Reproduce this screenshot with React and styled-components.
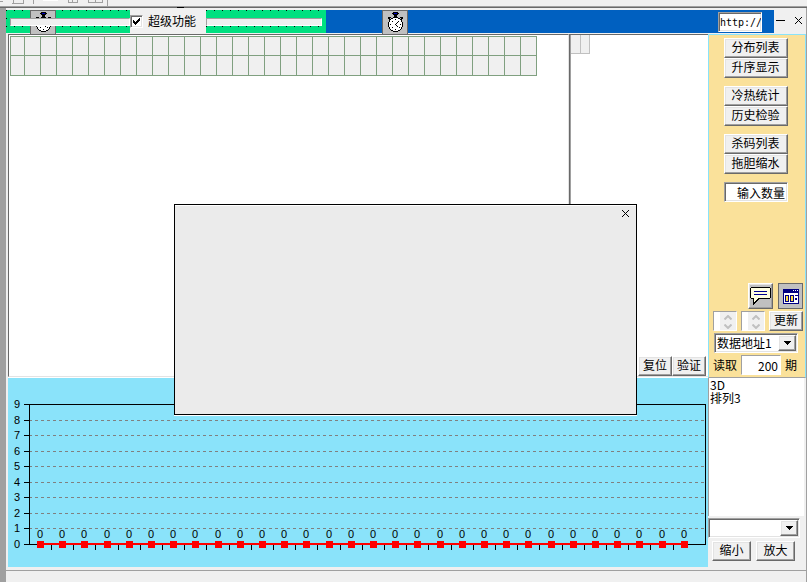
import styled, { createGlobalStyle, css } from "styled-components"

const yLabels = [9, 8, 7, 6, 5, 4, 3, 2, 1, 0]
const points = Array.from({ length: 30 }, () => 0)
const gridCols = Array.from({ length: 33 }, (_, i) => i)

const App = () => {
    return (
        <>
            <GlobalStyle />
            <Page>
                <TopStrip>
                    <StripIcons />
                </TopStrip>
                <Main>
                    <Gutter />
                    <Window>
                        <Header />
                        <Body>
                            <Panels>
                                <MainPanel>
                                    <NumberGrid />
                                </MainPanel>
                                <SubPanel>
                                    <SmallTable>
                                        <tbody>
                                            <tr>
                                                <td />
                                                <td />
                                            </tr>
                                        </tbody>
                                    </SmallTable>
                                    <PanelActions>
                                        <Button $w={34}>复位</Button>
                                        <Button $w={34}>验证</Button>
                                    </PanelActions>
                                </SubPanel>
                            </Panels>
                            <Tools />
                            <ChartArea>
                                <Chart />
                            </ChartArea>
                            <Lists />
                        </Body>
                        <StatusBar />
                    </Window>
                </Main>
                <Dialog role="dialog" aria-label="dialog">
                    <CloseButton aria-label="close">
                        <CrossIcon />
                    </CloseButton>
                </Dialog>
            </Page>
        </>
    )
}

const Header = () => (
    <HeaderBar>
        <GreenBox $w={124}>
            <IconButton $left={24} aria-label="timer">
                <ClockIcon />
            </IconButton>
            <Track $start={4} $end={0} />
        </GreenBox>
        <CheckLabel>
            <CheckWrap>
                <Check type="checkbox" defaultChecked />
                <CheckMark viewBox="0 0 7 7" width="7" height="7">
                    <path d="M0 2h1v1h1v1h1v-1h1v-1h1v-1h1v-1h1v3h-1v1h-1v1h-1v1h-1v1h-1v-1h-1v-1h-1z" />
                </CheckMark>
            </CheckWrap>
            超级功能
        </CheckLabel>
        <GreenBox $w={120}>
            <Track $start={0} $end={4} />
        </GreenBox>
        <BlueBox>
            <IconButton $left={56} aria-label="timer">
                <ClockIcon />
            </IconButton>
            <UrlInput aria-label="url" defaultValue="http://" />
        </BlueBox>
        <WindowButtons>
            <CaptionButton aria-label="minimize">
                <svg width="9" height="7" shapeRendering="crispEdges">
                    <rect y="3" width="9" height="1" />
                </svg>
            </CaptionButton>
            <CaptionButton aria-label="close">
                <CrossIcon />
            </CaptionButton>
        </WindowButtons>
    </HeaderBar>
)

const NumberGrid = () => (
    <GridTable>
        <tbody>
            {[19, 20].map((h) => (
                <tr key={h}>
                    {gridCols.map((c) => (
                        <GridCell key={c} $w={c === 0 ? 14 : 16} $h={h} />
                    ))}
                </tr>
            ))}
        </tbody>
    </GridTable>
)

const Tools = () => (
    <ToolColumn>
        <ButtonGroup>
            <Button $w={64}>分布列表</Button>
            <Button $w={64}>升序显示</Button>
        </ButtonGroup>
        <ButtonGroup>
            <Button $w={64}>冷热统计</Button>
            <Button $w={64}>历史检验</Button>
        </ButtonGroup>
        <ButtonGroup>
            <Button $w={64}>杀码列表</Button>
            <Button $w={64}>拖胆缩水</Button>
        </ButtonGroup>
        <CountInput aria-label="输入数量" defaultValue="输入数量" />
        <BottomTools>
            <ToolRow $gap={5}>
                <ToolButton aria-label="comment">
                    <BubbleIcon />
                </ToolButton>
                <ToolButton aria-label="window">
                    <WindowIcon />
                </ToolButton>
            </ToolRow>
            <ToolRow $gap={4}>
                <Spinner />
                <Spinner />
                <Button $w={34}>更新</Button>
            </ToolRow>
            <AddressRow>
                <Combo $w={84}>
                    <select aria-label="数据地址" defaultValue="1">
                        <option value="1">数据地址1</option>
                    </select>
                    <ComboArrow />
                </Combo>
            </AddressRow>
            <ReadRow>
                <label htmlFor="count">读取</label>
                <PeriodInput id="count" defaultValue="200" />
                <span>期</span>
            </ReadRow>
        </BottomTools>
    </ToolColumn>
)

const Spinner = () => (
    <SpinBox>
        <input aria-label="value" disabled />
        <SpinButtons>
            <button aria-label="up" disabled>
                <svg width="8" height="5" viewBox="0 0 8 5">
                    <path d="M0.5 4.5L4 1L7.5 4.5" />
                </svg>
            </button>
            <button aria-label="down" disabled>
                <svg width="8" height="5" viewBox="0 0 8 5">
                    <path d="M0.5 0.5L4 4L7.5 0.5" />
                </svg>
            </button>
        </SpinButtons>
    </SpinBox>
)

const ComboArrow = () => (
    <ArrowBox>
        <svg width="7" height="4" shapeRendering="crispEdges">
            <path d="M0 0h7v1h-1v1h-1v1h-1v1h-1v-1h-1v-1h-1v-1h-1z" />
        </svg>
    </ArrowBox>
)

const Lists = () => (
    <ListColumn>
        <ListBox size={2} aria-label="games">
            <option>3D</option>
            <option>排列3</option>
        </ListBox>
        <Combo $w={92}>
            <select aria-label="filter" />
            <ComboArrow />
        </Combo>
        <ZoomRow>
            <Button $w={39}>缩小</Button>
            <Button $w={39}>放大</Button>
        </ZoomRow>
    </ListColumn>
)

const Chart = () => {
    const lineY = (i) => 26 + Math.round(i * 15.5)
    const pointX = (i) => 32 + Math.round(i * 22.2)

    return (
        <ChartSvg viewBox="0 0 700 189" shapeRendering="crispEdges">
            {yLabels.map((label, i) => (
                <g key={label}>
                    <rect x="16" y={lineY(i)} width="6" height="1" />
                    <text x="12" y={lineY(i) + 4} textAnchor="end">{label}</text>
                    {i > 0 && i < 9 && (
                        <line x1="21" x2="697" y1={lineY(i) + 0.5} y2={lineY(i) + 0.5} stroke="#808080" strokeDasharray="3 3" />
                    )}
                </g>
            ))}
            <rect x="21.5" y="26.5" width="676" height="140" fill="none" stroke="#000" />
            <rect x="32" y="165" width="644" height="2" fill="#f00" />
            {points.map((p, i) => (
                <g key={i}>
                    {i < points.length - 1 && <rect x={pointX(i) + 11} y="167" width="1" height="5" />}
                    <rect x={pointX(i) - 3} y="163" width="7" height="7" fill="#f00" />
                    <text x={pointX(i)} y="160" textAnchor="middle">{p}</text>
                </g>
            ))}
        </ChartSvg>
    )
}

const CrossIcon = () => (
    <svg width="9" height="9" viewBox="0 0 9 9">
        <path d="M1 1L8 8M8 1L1 8" stroke="#000" fill="none" />
    </svg>
)

const ClockIcon = () => (
    <svg width="17" height="21" viewBox="0 0 17 21" shapeRendering="crispEdges">
        <path d="M6 0h5v1h1v1h-1v1h-5v-1h-1v-1h1z" />
        <rect x="7" y="1" width="3" height="1" fill="#0000c0" />
        <path d="M7 3h3v2h-3zM1 5h3v1h-1v2h-1v-1h-1zM13 5h3v2h-1v1h-1v-2h-1z" />
        <path d="M6 5h5v1h2v1h1v1h1v2h1v5h-1v2h-1v1h-1v1h-2v1h-5v-1h-2v-1h-1v-1h-1v-2h-1v-5h1v-2h1v-1h1v-1h2z" fill="#fff" />
        <path d="M6 5h5v1h-5zM4 6h2v1h-2zM11 6h2v1h-2zM3 7h1v1h-1zM13 7h1v1h-1zM2 8h1v2h-1zM14 8h1v2h-1zM1 10h1v5h-1zM15 10h1v5h-1zM2 15h1v2h-1zM14 15h1v2h-1zM3 17h1v1h-1zM13 17h1v1h-1zM4 18h2v1h-2zM11 18h2v1h-2zM6 19h5v1h-5z" />
        <path d="M8 7h1v1h-1zM8 17h1v1h-1zM3 12h1v1h-1zM13 12h1v1h-1zM5 9h1v1h-1zM5 15h1v1h-1zM12 15h1v1h-1zM11 9h1v1h-1zM10 10h1v1h-1zM9 11h1v1h-1zM8 12h1v1h-1zM9 13h1v1h-1zM10 14h1v1h-1z" />
    </svg>
)

const BubbleIcon = () => (
    <svg width="21" height="18" viewBox="0 0 21 18" shapeRendering="crispEdges">
        <path d="M1 0h19v1h1v10h-1v1h-11v1h-1v1h-1v1h-1v1h-1v1h-1v1h-1v-6h-2v-1h-1v-10h1z" />
        <path d="M1 1h19v10h-12v1h-1v1h-1v1h-1v1h-1v-4h-3z" fill="#ffffe0" />
        <path d="M4 4h13v1h-13zM4 7h13v1h-13z" fill="#000090" />
    </svg>
)

const WindowIcon = () => (
    <svg width="16" height="15" viewBox="0 0 16 15" shapeRendering="crispEdges">
        <rect width="16" height="15" fill="#000080" />
        <rect x="1" y="4" width="14" height="10" fill="#fff" />
        <path d="M10 1h1v1h-1zM12 1h1v1h-1zM14 1h1v1h-1z" fill="#fff" />
        <path d="M2 6h4v7h-4zM7 6h4v7h-4zM12 6h3v1h-3zM12 9h2v2h-2z" fill="#000080" />
        <path d="M3 7h2v5h-2zM8 7h2v5h-2z" fill="#ffe040" />
    </svg>
)

const StripIcons = () => (
    <svg width="190" height="8" shapeRendering="crispEdges">
        <path d="M0 1h3M12 3.5h12M13 0v3M23 0v3M68 2.5h9M68 0v3M72.5 0v3M77 0v3M88 2.5h15M88.5 0v3M95.5 0v3M102.5 0v3M33.5 0v4M107.5 0v6" stroke="#a0a0a0" fill="none" />
        <rect x="43" y="0" width="15" height="1" fill="#fff" />
        <rect x="177" y="7" width="7" height="1" />
    </svg>
)

const GlobalStyle = createGlobalStyle`
    * {
        box-sizing: border-box;
    }
    body {
        margin: 0;
        background: #f0f0f0;
    }
    body, button, input, select, option {
        font-family: "Noto Sans CJK SC", "Liberation Sans", sans-serif;
        font-size: 12px;
        line-height: 14px;
        color: #000;
    }
    button, input, select {
        margin: 0;
        padding: 0;
        border-radius: 0;
        appearance: none;
    }
    svg {
        display: block;
    }
`

const raised = css`
    border: 1px solid;
    border-color: #fff #696969 #696969 #fff;
    box-shadow: inset -1px -1px 0 #a0a0a0, inset 1px 1px 0 #e3e3e3;
`

const sunken = css`
    border: 1px solid;
    border-color: #a0a0a0 #fff #fff #a0a0a0;
    box-shadow: inset 1px 1px 0 #696969, inset -1px -1px 0 #e3e3e3;
`

const Page = styled.div`
    position: relative;
    display: flex;
    flex-direction: column;
    min-height: 100vh;
`

const TopStrip = styled.div`
    height: 8px;
    background: linear-gradient(#a0a0a0, #a0a0a0) 0 6px / 100% 1px no-repeat,
        linear-gradient(#696969, #696969) 0 7px / 100% 1px no-repeat;
`

const Main = styled.div`
    display: flex;
    flex: 1;
`

const Gutter = styled.div`
    width: 6px;
    background: #a0a0a0;
`

const Window = styled.div`
    display: flex;
    flex-direction: column;
    flex: 1;
    min-width: 0;
    padding-top: 2px;
    border-right: 1px solid #a0a0a0;
`

const HeaderBar = styled.header`
    display: flex;
    height: 24px;
    padding-bottom: 1px;
`

const GreenBox = styled.div`
    position: relative;
    display: flex;
    align-items: flex-start;
    width: ${(props) => props.$w}px;
    padding-top: 8px;
    background: conic-gradient(from 270deg at 1px 1px, #000 90deg, transparent 0) 0 0 / 8px 8px, #00e080;
`

const Track = styled.div`
    position: relative;
    z-index: 2;
    flex: 1;
    height: 8px;
    margin: 0 ${(props) => props.$end}px 0 ${(props) => props.$start}px;
    background: #f0f0f0;
    border: 1px solid;
    border-color: #a0a0a0 #fff #fff #a0a0a0;
`

const IconButton = styled.button`
    position: absolute;
    z-index: 1;
    top: 0;
    left: ${(props) => props.$left}px;
    display: grid;
    place-items: center;
    width: 26px;
    height: 25px;
    background: #c0c0c0;
    border: 1px solid #696969;
`

const CheckLabel = styled.label`
    display: flex;
    align-items: center;
    gap: 5px;
    width: 76px;
    padding-bottom: 1px;
`

const CheckWrap = styled.span`
    display: grid;
    place-items: center;
`

const Check = styled.input`
    ${sunken}
    grid-area: 1 / 1;
    width: 13px;
    height: 13px;
    background: #fff;
`

const CheckMark = styled.svg`
    grid-area: 1 / 1;
    pointer-events: none;
`

const BlueBox = styled.div`
    position: relative;
    display: flex;
    flex: 1;
    justify-content: flex-end;
    padding: 2px 12px 1px;
    background: #0060c0;
`

const UrlInput = styled.input`
    ${sunken}
    width: 44px;
    height: 20px;
    padding-left: 1px;
    font-family: "DejaVu Sans Mono", monospace;
    font-size: 10px;
    background: #fff;
`

const WindowButtons = styled.div`
    display: flex;
    align-items: center;
    gap: 9px;
    width: 32px;
    padding: 0 0 2px 2px;
`

const CaptionButton = styled.button`
    background: none;
    border: 0;
`

const Body = styled.div`
    display: grid;
    flex: 1;
    grid-template-columns: 1fr 98px;
    grid-template-rows: 1fr auto;
    padding-left: 2px;
`

const Panels = styled.div`
    display: flex;
    background: #fff;
    border-bottom: 1px solid #fff;
`

const panel = css`
    border-top: 1px solid #696969;
    border-left: 1px solid #696969;
    border-bottom: 1px solid #e3e3e3;
`

const MainPanel = styled.section`
    ${panel}
    flex: 1;
    padding: 1px;
    border-right: 1px solid #e3e3e3;
`

const SubPanel = styled.section`
    ${panel}
    display: flex;
    flex-direction: column;
    justify-content: space-between;
    width: 139px;
    box-shadow: inset 1px 0 0 #a0a0a0;
`

const GridTable = styled.table`
    border-collapse: separate;
    border-spacing: 0;
    border-top: 1px solid #80a080;
    border-left: 1px solid #80a080;
    background: #f0f0f0;
`

const GridCell = styled.td`
    width: ${(props) => props.$w}px;
    min-width: ${(props) => props.$w}px;
    height: ${(props) => props.$h}px;
    padding: 0;
    border-right: 1px solid #80a080;
    border-bottom: 1px solid #80a080;
`

const SmallTable = styled.table`
    width: 19px;
    margin-left: 1px;
    border-spacing: 0;
    background: #f0f0f0;

    td {
        height: 19px;
        padding: 0;
        border-right: 1px solid #c0c0c0;
        border-bottom: 1px solid #c0c0c0;
    }
`

const PanelActions = styled.div`
    display: flex;
    justify-content: flex-end;
    padding-right: 2px;
`

const Button = styled.button`
    ${raised}
    width: ${(props) => props.$w}px;
    height: 20px;
    padding-bottom: 2px;
    background: #f0f0f0;
    white-space: nowrap;
`

const ToolColumn = styled.aside`
    display: flex;
    flex-direction: column;
    gap: 8px;
    min-height: 343px;
    padding: 3px 2px 2px 0;
    background: #fae19a;
    border: 1px solid #8ae3fa;
    border-bottom: 1px solid #a0a0a0;
`

const ButtonGroup = styled.div`
    display: flex;
    flex-direction: column;
    align-items: center;
    padding-right: 1px;
`

const CountInput = styled.input`
    ${sunken}
    align-self: center;
    width: 64px;
    height: 20px;
    padding-right: 2px;
    text-align: right;
    background: #fff;
`

const BottomTools = styled.div`
    display: flex;
    flex-direction: column;
    gap: 2px;
    margin-top: auto;
`

const ToolRow = styled.div`
    display: flex;
    justify-content: flex-end;
    gap: ${(props) => props.$gap}px;
`

const ToolButton = styled.button`
    ${raised}
    display: grid;
    place-items: center;
    width: 25px;
    height: 26px;
    background: #c0c0c0;

    & + & {
        border-color: #696969;
        box-shadow: none;
    }
`

const SpinBox = styled.div`
    display: flex;
    width: 24px;
    height: 20px;
    background: #fff;
    border: 1px solid;
    border-color: #a0a0a0 #fff #fff #a0a0a0;

    input {
        width: 6px;
        background: #fff;
        border: 0;
    }
`

const SpinButtons = styled.div`
    display: flex;
    flex: 1;
    flex-direction: column;
    justify-content: space-between;
    align-items: center;
    padding: 3px 0 1px;
    background: #f0f0f0;

    button {
        background: none;
        border: 0;
    }

    path {
        fill: none;
        stroke: #c0c0c0;
        stroke-width: 2;
    }
`

const AddressRow = styled.div`
    padding-left: 5px;
`

const Combo = styled.div`
    ${sunken}
    display: grid;
    grid-template-columns: 1fr 18px;
    width: ${(props) => props.$w}px;
    height: 20px;
    padding: 1px;
    background: #fff;

    select {
        grid-area: 1 / 1 / 2 / 3;
        padding-left: 1px;
        background: none;
        border: 0;
    }
`

const ArrowBox = styled.span`
    ${raised}
    grid-area: 1 / 2;
    display: grid;
    place-items: center;
    background: #f0f0f0;
    pointer-events: none;
`

const ReadRow = styled.div`
    display: flex;
    align-items: center;
    gap: 4px;
    padding-left: 4px;
`

const PeriodInput = styled.input`
    width: 40px;
    height: 20px;
    padding-right: 2px;
    text-align: right;
    background: #fff;
    border: 1px solid;
    border-color: #a0a0a0 #fff #fff #a0a0a0;
`

const ChartArea = styled.section`
    background: #8ae3fa;
`

const ChartSvg = styled.svg`
    width: 100%;
    height: auto;

    text {
        font-family: "Liberation Sans", sans-serif;
        font-size: 11px;
    }
`

const ListColumn = styled.aside`
    display: flex;
    flex-direction: column;
    padding-bottom: 6px;
`

const ListBox = styled.select`
    flex: 1;
    margin: 0 2px 2px 0;
    overflow: hidden;
    background: #fff;
    border: 0;
    border-left: 1px solid #a0a0a0;

    option {
        display: flex;
        align-items: center;
        height: 13px;
        min-height: 0;
        padding: 0 1px;
        overflow: visible;
    }
`

const ZoomRow = styled.div`
    display: flex;
    gap: 5px;
    padding: 3px 0 0 4px;
`

const StatusBar = styled.footer`
    height: 15px;
    background: linear-gradient(#a0a0a0, #a0a0a0) 0 3px / 100% 1px no-repeat;
`

const Dialog = styled.div`
    position: absolute;
    z-index: 5;
    top: 204px;
    left: 174px;
    display: flex;
    justify-content: flex-end;
    align-items: flex-start;
    width: 463px;
    height: 211px;
    padding: 4px 6px;
    background: #ebebeb;
    border: 1px solid #000;
    box-shadow: inset 0 1px 0 #fff, 0 1px 0 #fff;
`

const CloseButton = styled.button`
    background: none;
    border: 0;
`

export default App
